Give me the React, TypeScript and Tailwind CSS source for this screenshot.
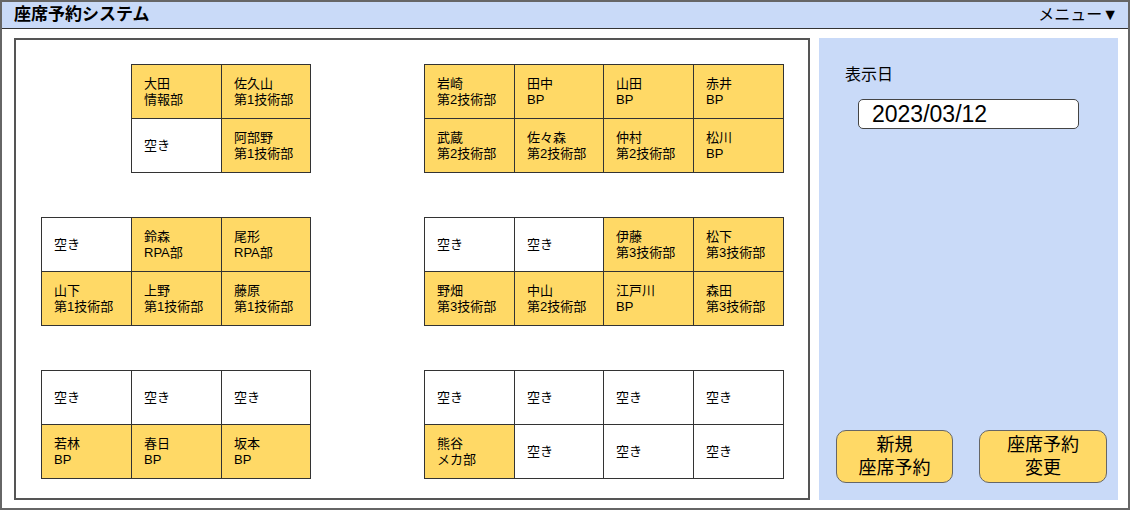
import React from 'react';

type Seat = { name?: string; dept?: string };

const FONT = '"Liberation Sans", "Noto Sans CJK JP", sans-serif';

const free: Seat = {};

const groupA: Seat[] = [
  { name: '大田', dept: '情報部' },
  { name: '佐久山', dept: '第1技術部' },
  free,
  { name: '阿部野', dept: '第1技術部' },
];

const groupB: Seat[] = [
  { name: '岩崎', dept: '第2技術部' },
  { name: '田中', dept: 'BP' },
  { name: '山田', dept: 'BP' },
  { name: '赤井', dept: 'BP' },
  { name: '武蔵', dept: '第2技術部' },
  { name: '佐々森', dept: '第2技術部' },
  { name: '仲村', dept: '第2技術部' },
  { name: '松川', dept: 'BP' },
];

const groupC: Seat[] = [
  free,
  { name: '鈴森', dept: 'RPA部' },
  { name: '尾形', dept: 'RPA部' },
  { name: '山下', dept: '第1技術部' },
  { name: '上野', dept: '第1技術部' },
  { name: '藤原', dept: '第1技術部' },
];

const groupD: Seat[] = [
  free,
  free,
  { name: '伊藤', dept: '第3技術部' },
  { name: '松下', dept: '第3技術部' },
  { name: '野畑', dept: '第3技術部' },
  { name: '中山', dept: '第2技術部' },
  { name: '江戸川', dept: 'BP' },
  { name: '森田', dept: '第3技術部' },
];

const groupE: Seat[] = [
  free,
  free,
  free,
  { name: '若林', dept: 'BP' },
  { name: '春日', dept: 'BP' },
  { name: '坂本', dept: 'BP' },
];

const groupF: Seat[] = [
  free,
  free,
  free,
  free,
  { name: '熊谷', dept: 'メカ部' },
  free,
  free,
  free,
];

const SeatCell = ({ seat }: { seat: Seat }) => {
  const taken = !!seat.name;
  return (
    <div
      className={`h-[54px] border-r border-b border-[#333] flex items-center pl-[12px] text-[13px] leading-[16px] text-black ${
        taken ? 'bg-[#ffd966]' : 'bg-white'
      }`}
    >
      {taken
        ? (
            <div>
              <div>{seat.name}</div>
              <div>{seat.dept}</div>
            </div>
          )
        : <span>空き</span>}
    </div>
  );
};

const SeatGroup = ({ seats, cols }: { seats: Seat[]; cols: 2 | 3 | 4 }) => {
  const colClass = cols === 2
    ? 'grid-cols-[90px_89px]'
    : cols === 3
      ? 'grid-cols-[90px_90px_89px]'
      : 'grid-cols-[90px_89px_90px_90px]';
  return (
    <div className={`grid ${colClass} border-l border-t border-[#333]`}>
      {seats.map((s, i) => (
        <SeatCell key={i} seat={s} />
      ))}
    </div>
  );
};

export default function App() {
  return (
    <div className="w-[1130px] h-[510px] bg-white" style={{ fontFamily: FONT }}>
      <div className="w-[1130px] h-[510px] border-2 border-[#666] flex flex-col">
        {/* header */}
        <div className="h-[27px] bg-[#c9daf8] border-b border-[#333] flex items-center justify-between pl-[12px] pr-[10px]">
          <span className="text-[17px] font-bold text-black">座席予約システム</span>
          <span className="text-[16px] text-black">メニュー▼</span>
        </div>

        <div className="flex gap-[9px] pt-[9px] pl-[12px]">
          {/* seat map */}
          <div className="w-[796px] h-[462px] border-2 border-[#555] pl-[25px] pt-[24px] flex flex-col gap-[44px]">
            <div className="flex gap-[113px]">
              <div className="w-[270px] flex justify-end">
                <SeatGroup seats={groupA} cols={2} />
              </div>
              <SeatGroup seats={groupB} cols={4} />
            </div>
            <div className="flex gap-[113px]">
              <div className="w-[270px] flex justify-end">
                <SeatGroup seats={groupC} cols={3} />
              </div>
              <SeatGroup seats={groupD} cols={4} />
            </div>
            <div className="flex gap-[113px]">
              <div className="w-[270px] flex justify-end">
                <SeatGroup seats={groupE} cols={3} />
              </div>
              <SeatGroup seats={groupF} cols={4} />
            </div>
          </div>

          {/* side panel */}
          <div className="w-[299px] h-[462px] bg-[#c9daf8] flex flex-col pl-[26px] pt-[28px] pb-[17px]">
            <div className="text-[16px] leading-[18px] text-black">表示日</div>
            <div className="mt-[15px] ml-[13px] w-[221px] h-[30px] bg-white border border-[#444] rounded-[5px] flex items-center pl-[13px] text-[23px] text-black leading-none">
              2023/03/12
            </div>
            <div className="mt-auto flex gap-[26px] ml-[-9px]">
              <button
                type="button"
                className="w-[117px] h-[53px] bg-[#ffd966] border border-[#666] rounded-[10px] text-[18px] leading-[23px] text-black flex flex-col items-center justify-center"
              >
                <span>新規</span>
                <span>座席予約</span>
              </button>
              <button
                type="button"
                className="w-[128px] h-[53px] bg-[#ffd966] border border-[#666] rounded-[10px] text-[18px] leading-[23px] text-black flex flex-col items-center justify-center"
              >
                <span>座席予約</span>
                <span>変更</span>
              </button>
            </div>
          </div>
        </div>
      </div>
    </div>
  );
}
